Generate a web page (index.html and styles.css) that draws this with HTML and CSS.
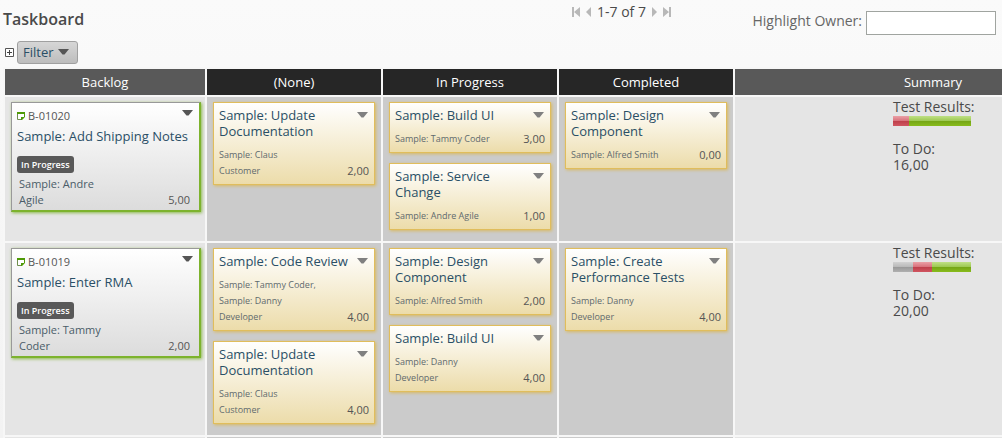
FILE: index.html
```html
<!DOCTYPE html>
<html lang="en">
<head>
<meta charset="utf-8">
<title>Taskboard</title>
<link rel="stylesheet" href="styles.css">
</head>
<body>
<header class="toolbar">
  <h1 class="page-title">Taskboard</h1>
  <nav class="pager" aria-label="Pages">
    <button class="pager-btn" aria-label="First page"><svg width="8" height="10" viewBox="0 0 8 10"><path d="M0 0h2v10H0zM8 0v10L2 5z"/></svg></button>
    <button class="pager-btn" aria-label="Previous page"><svg width="5" height="10" viewBox="0 0 5 10"><path d="M5 0v10L0 5z"/></svg></button>
    <span class="pager-text">1-7 of 7</span>
    <button class="pager-btn" aria-label="Next page"><svg width="5" height="10" viewBox="0 0 5 10"><path d="M0 0v10l5-5z"/></svg></button>
    <button class="pager-btn" aria-label="Last page"><svg width="8" height="10" viewBox="0 0 8 10"><path d="M6 0h2v10H6zM0 0v10l6-5z"/></svg></button>
  </nav>
  <div class="highlight">
    <label for="owner">Highlight Owner:</label>
    <input id="owner" class="owner-input" type="text">
  </div>
</header>
<div class="filter-bar">
  <button class="expand" aria-label="Expand filter"><svg width="9" height="9" viewBox="0 0 9 9"><path d="M.5.5h8v8h-8z" fill="#fff" stroke="#555"/><path d="M2 4h5v1H2zM4 2h1v5H4z" fill="#444"/></svg></button>
  <button class="filter-btn">Filter <svg width="11" height="6" viewBox="0 0 11 6"><path d="M0 0h11L6.500 5.500h-2z"/></svg></button>
</div>
<table class="board">
  <colgroup><col class="col-backlog"><col class="col-status"><col class="col-status"><col class="col-status"><col></colgroup>
  <thead>
    <tr>
      <th>Backlog</th>
      <th class="dark">(None)</th>
      <th class="dark">In Progress</th>
      <th class="dark">Completed</th>
      <th><div class="summary-area">Summary</div></th>
    </tr>
  </thead>
  <tbody>
    <tr>
      <td>
        <article class="story">
          <div class="story-head"><svg class="note" width="8" height="8" viewBox="0 0 8 8"><path d="M.5 1v6.500h4l3-3V1" fill="#fff" stroke="#6f8f4c"/><path d="M0 0h8v2H0zM7 2h1v3L5 8H4V5h3z" fill="#4f9a06"/></svg><span class="story-id">B-01020</span><button class="menu" aria-label="Story menu"><svg width="11" height="6" viewBox="0 0 11 6"><path d="M0 0h11L6.500 5.500h-2z"/></svg></button></div>
          <a class="story-title" href="#">Sample: Add Shipping Notes</a>
          <span class="badge">In Progress</span>
          <div class="story-foot"><span class="story-owner">Sample: Andre Agile</span><span class="points">5,00</span></div>
        </article>
      </td>
      <td class="lane">
        <article class="task">
          <div class="task-head"><a class="task-title" href="#">Sample: Update Documentation</a><button class="menu" aria-label="Task menu"><svg width="11" height="6" viewBox="0 0 11 6"><path d="M0 0h11L6.500 5.500h-2z"/></svg></button></div>
          <div class="task-foot"><span class="task-owner">Sample: Claus Customer</span><span class="points">2,00</span></div>
        </article>
      </td>
      <td class="lane">
        <article class="task">
          <div class="task-head"><a class="task-title" href="#">Sample: Build UI</a><button class="menu" aria-label="Task menu"><svg width="11" height="6" viewBox="0 0 11 6"><path d="M0 0h11L6.500 5.500h-2z"/></svg></button></div>
          <div class="task-foot"><span class="task-owner">Sample: Tammy Coder</span><span class="points">3,00</span></div>
        </article>
        <article class="task">
          <div class="task-head"><a class="task-title" href="#">Sample: Service Change</a><button class="menu" aria-label="Task menu"><svg width="11" height="6" viewBox="0 0 11 6"><path d="M0 0h11L6.500 5.500h-2z"/></svg></button></div>
          <div class="task-foot"><span class="task-owner">Sample: Andre Agile</span><span class="points">1,00</span></div>
        </article>
      </td>
      <td class="lane">
        <article class="task">
          <div class="task-head"><a class="task-title" href="#">Sample: Design Component</a><button class="menu" aria-label="Task menu"><svg width="11" height="6" viewBox="0 0 11 6"><path d="M0 0h11L6.500 5.500h-2z"/></svg></button></div>
          <div class="task-foot"><span class="task-owner">Sample: Alfred Smith</span><span class="points">0,00</span></div>
        </article>
      </td>
      <td>
        <div class="summary-area"><div class="summary">
          <div>Test Results:</div>
          <div class="results"><span class="fail" style="width:16px"></span><span class="pass" style="width:62px"></span></div>
          <div>To Do:<br>16,00</div>
        </div></div>
      </td>
    </tr>
    <tr>
      <td>
        <article class="story">
          <div class="story-head"><svg class="note" width="8" height="8" viewBox="0 0 8 8"><path d="M.5 1v6.500h4l3-3V1" fill="#fff" stroke="#6f8f4c"/><path d="M0 0h8v2H0zM7 2h1v3L5 8H4V5h3z" fill="#4f9a06"/></svg><span class="story-id">B-01019</span><button class="menu" aria-label="Story menu"><svg width="11" height="6" viewBox="0 0 11 6"><path d="M0 0h11L6.500 5.500h-2z"/></svg></button></div>
          <a class="story-title" href="#">Sample: Enter RMA</a>
          <span class="badge">In Progress</span>
          <div class="story-foot"><span class="story-owner">Sample: Tammy Coder</span><span class="points">2,00</span></div>
        </article>
      </td>
      <td class="lane">
        <article class="task">
          <div class="task-head"><a class="task-title" href="#">Sample: Code Review</a><button class="menu" aria-label="Task menu"><svg width="11" height="6" viewBox="0 0 11 6"><path d="M0 0h11L6.500 5.500h-2z"/></svg></button></div>
          <div class="task-foot"><span class="task-owner">Sample: Tammy Coder, Sample: Danny Developer</span><span class="points">4,00</span></div>
        </article>
        <article class="task">
          <div class="task-head"><a class="task-title" href="#">Sample: Update Documentation</a><button class="menu" aria-label="Task menu"><svg width="11" height="6" viewBox="0 0 11 6"><path d="M0 0h11L6.500 5.500h-2z"/></svg></button></div>
          <div class="task-foot"><span class="task-owner">Sample: Claus Customer</span><span class="points">4,00</span></div>
        </article>
      </td>
      <td class="lane">
        <article class="task">
          <div class="task-head"><a class="task-title" href="#">Sample: Design Component</a><button class="menu" aria-label="Task menu"><svg width="11" height="6" viewBox="0 0 11 6"><path d="M0 0h11L6.500 5.500h-2z"/></svg></button></div>
          <div class="task-foot"><span class="task-owner">Sample: Alfred Smith</span><span class="points">2,00</span></div>
        </article>
        <article class="task">
          <div class="task-head"><a class="task-title" href="#">Sample: Build UI</a><button class="menu" aria-label="Task menu"><svg width="11" height="6" viewBox="0 0 11 6"><path d="M0 0h11L6.500 5.500h-2z"/></svg></button></div>
          <div class="task-foot"><span class="task-owner">Sample: Danny Developer</span><span class="points">4,00</span></div>
        </article>
      </td>
      <td class="lane">
        <article class="task">
          <div class="task-head"><a class="task-title" href="#">Sample: Create Performance Tests</a><button class="menu" aria-label="Task menu"><svg width="11" height="6" viewBox="0 0 11 6"><path d="M0 0h11L6.500 5.500h-2z"/></svg></button></div>
          <div class="task-foot"><span class="task-owner">Sample: Danny Developer</span><span class="points">4,00</span></div>
        </article>
      </td>
      <td>
        <div class="summary-area"><div class="summary">
          <div>Test Results:</div>
          <div class="results"><span class="none" style="width:20px"></span><span class="fail" style="width:19px"></span><span class="pass" style="width:39px"></span></div>
          <div>To Do:<br>20,00</div>
        </div></div>
      </td>
    </tr>
    <tr class="next-row"><td></td><td class="lane"></td><td class="lane"></td><td class="lane"></td><td></td></tr>
  </tbody>
</table>
</body>
</html>
```

FILE: styles.css
```css
* { box-sizing: border-box; }
html { height: 100%; }
body {
  margin: 0;
  height: 100%;
  overflow: hidden;
  font-family: "Open Sans", sans-serif;
  font-size: 14px;
  line-height: 16px;
  color: #4a4a4a;
  background: linear-gradient(#fafafa, #f3f3f3);
}
button {
  margin: 0;
  padding: 0;
  border: 0;
  background: none;
  font: inherit;
  color: inherit;
}
svg { display: block; fill: currentColor; }
a { color: #2a4f66; text-decoration: none; }

.toolbar {
  display: grid;
  grid-template-columns: 57% auto 1fr;
  align-items: start;
  height: 41px;
  padding: 4px 6px 0 3px;
}
.page-title {
  margin: 0;
  padding-top: 5px;
  font-size: 16px;
  line-height: 20px;
  font-weight: 600;
}
.pager { display: flex; align-items: center; gap: 6px; padding-left: 3px; }
.pager-btn { color: #b8b8b8; }
.highlight {
  display: flex;
  justify-content: flex-end;
  gap: 4px;
  padding-top: 7px;
  line-height: 20px;
  color: #666;
}
.owner-input {
  width: 130px;
  height: 24px;
  border: 1px solid #a0a4a0;
  background: #fff;
  font: inherit;
}

.filter-bar { display: flex; align-items: center; gap: 3px; padding: 0 5px 3px; }
.filter-btn {
  display: flex;
  align-items: center;
  gap: 4px;
  height: 23px;
  padding: 0 8px 2px 5px;
  border: 1px solid #a0a0a0;
  border-radius: 3px;
  background: linear-gradient(#d6d6d6, #bdbdbd);
  font-size: 13px;
  color: #2a4f66;
}
.filter-btn svg { color: #555; }

.board {
  width: calc(100% - 1px);
  margin: 0 0 -2px 3px;
  table-layout: fixed;
  border-collapse: separate;
  border-spacing: 2px;
  background: #f7f7f7;
}
.col-backlog { width: 200px; }
.col-status { width: 174px; }
th {
  height: 26px;
  padding: 0;
  background: #595959;
  color: #fff;
  font-size: 13px;
  font-weight: 500;
}
th.dark { background: #262626; }
td {
  padding: 5px 6px 11px;
  vertical-align: top;
  background: #e5e5e5;
}
td.lane { background: #cbcbcb; }
.next-row td { height: 1px; padding: 0; }

.menu { color: #808080; }
.points { margin-left: auto; font-size: 11px; color: #555; }

.story {
  width: 190px;
  padding: 5px 6px 2px 5px;
  border: solid #999;
  border-width: 1px 2px 2px 1px;
  border-right-color: #7db32d;
  border-bottom-color: #7db32d;
  background: linear-gradient(#fff, #dcdcdc);
  box-shadow: 1px 1px 3px #8cba4a;
}
.story-head { display: flex; align-items: center; gap: 3px; font-size: 11px; color: #555; }
.story-head .menu { margin-left: auto; padding-bottom: 6px; color: #555; }
.story-title { display: block; margin-top: 4px; font-size: 13px; white-space: nowrap; }
.badge {
  display: block;
  width: max-content;
  margin-top: 12px;
  padding: 0 4px;
  border-radius: 3px;
  background: #595959;
  color: #fff;
  font-size: 9px;
  line-height: 17px;
  font-weight: 600;
}
.story-foot { display: flex; align-items: flex-end; margin-top: 3px; padding: 0 3px 0 2px; }
.story-owner { width: 100px; font-size: 11px; color: #4a5c68; }

.task {
  padding: 4px 5px 5px;
  border: 1px solid #e0bd5c;
  background: linear-gradient(#fff, #ecdcaa);
  box-shadow: 1px 1px 3px #d8b960;
}
.task + .task { margin-top: 10px; }
.task-head { display: flex; align-items: flex-start; justify-content: space-between; }
.task-head .menu { padding: 5px 1px 0 0; }
.task-title { width: 130px; font-size: 13px; }
.task-foot { display: flex; align-items: flex-end; margin-top: 8px; }
.task-owner { width: 98px; font-size: 9px; color: #5f6a6e; }

.summary-area { width: 138px; margin-left: auto; text-align: center; }
td .summary-area { margin-right: -6px; }
.summary { width: 82px; margin: 0 auto; padding-left: 1px; text-align: left; white-space: nowrap; }
td .summary { margin-top: -3px; }
.results { display: flex; height: 10px; margin: 1px 0 15px; }
.results .none { background: linear-gradient(#d2d2d2, #b8b8b8 50%, #989898 50%, #b0b0b0); }
.results .fail { background: linear-gradient(#eaa0a6, #d8707a 50%, #bd3f4a 50%, #d05560); }
.results .pass { background: linear-gradient(#bfe085, #9cc850 50%, #74a516 50%, #88bb1c); }
```
